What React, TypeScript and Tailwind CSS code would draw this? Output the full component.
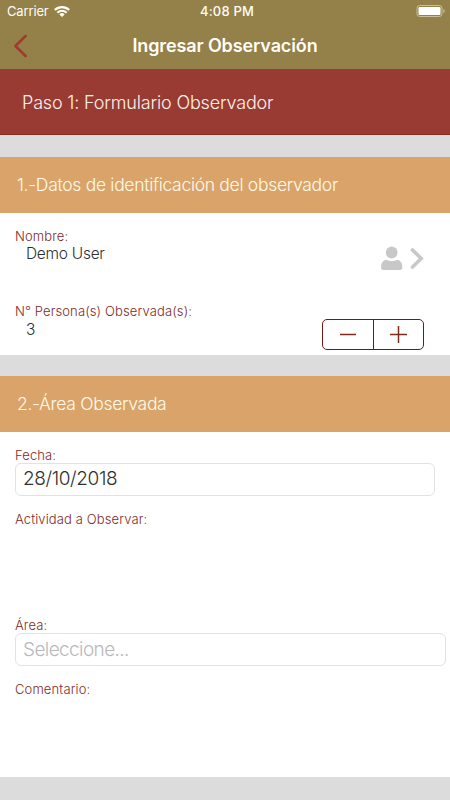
import { useState } from "react";

function SectionTitle({ children }: { children: string }) {
  return (
    <h2 className="flex h-14 items-center bg-[#d9a369] pl-[17px] pt-px text-[17.5px] font-[350] tracking-[-0.3px] text-[#fffbea]">
      {children}
    </h2>
  );
}

function Label({ children }: { children: string }) {
  return (
    <div className="text-[13px] leading-4 font-light tracking-[0.12px] text-[#80291f]">
      {children}
    </div>
  );
}

export default function App() {
  const [count, setCount] = useState(3);

  return (
    <div className="flex h-[800px] w-[450px] flex-col overflow-hidden bg-[#dcdcdc] font-['Inter',sans-serif]">
      <header className="h-[69px] shrink-0 bg-[#948049] text-[#fffef6]">
        <div className="grid h-[23px] grid-cols-3 items-center pl-[7px] pr-[5px] text-[13px]">
          <div className="flex items-center gap-[5px]">
            <span className="tracking-[-0.15px]">Carrier</span>
            <svg width="16" height="11" viewBox="0 0 16 11" fill="none" stroke="currentColor" strokeWidth="2.1">
              <path d="M.8 4.1a10.2 10.2 0 0 1 14.4 0" />
              <path d="M3.4 6.7a6.5 6.5 0 0 1 9.2 0" />
              <path d="M8 11 5.4 8.4a3.7 3.7 0 0 1 5.2 0Z" fill="currentColor" stroke="none" />
            </svg>
          </div>
          <span className="pl-[2px] text-center font-medium tracking-[0.2px]">4:08 PM</span>
          <svg className="mb-[2px] justify-self-end" width="29" height="12" viewBox="0 0 29 12">
            <rect x="1" y=".5" width="25" height="11" rx="2.7" fill="none" stroke="#c9bf9f" />
            <rect x="2.5" y="2" width="22" height="8" rx="1.2" fill="#fff" />
            <path d="M27.3 4v4c1.8-.6 1.8-3.4 0-4Z" fill="#c9bf9f" />
          </svg>
        </div>
        <div className="grid h-[45px] grid-cols-[60px_1fr_60px] items-center">
          <button className="pl-[13px]">
            <svg width="15" height="24" viewBox="0 0 15 24" fill="none" stroke="#a03c2f" strokeWidth="2.6" strokeLinecap="round" strokeLinejoin="round">
              <path d="M12.6 2 2.4 12l10.2 10" />
            </svg>
          </button>
          <h1 className="text-center text-[18px] font-semibold tracking-[-0.12px]">Ingresar Observación</h1>
        </div>
      </header>

      <div className="flex h-[66px] shrink-0 items-center border-b border-[#8b2a20] bg-[#993b32] pl-[22px] pt-[2px] text-[18px] font-[350] tracking-[-0.17px] text-[#fdf3ee]">
        Paso 1: Formulario Observador
      </div>

      <section className="mt-[22px] h-[198px] shrink-0 bg-white">
        <SectionTitle>1.-Datos de identificación del observador</SectionTitle>
        <div className="flex h-[75px] justify-between pl-[15px] pr-[26px] pt-[15px]">
          <div>
            <Label>Nombre:</Label>
            <div className="pl-[11px] pt-px text-[15.5px] leading-[18px] font-light tracking-[-0.28px] text-[#2f2f2f]">Demo User</div>
          </div>
          <svg className="mt-[17px]" width="43" height="26" viewBox="0 0 43 26" fill="#c8c8c8">
            <circle cx="10.7" cy="7.5" r="5.9" />
            <path d="M0 22.3C0 18 1.800 15.500 5.200 14.800c3.400 1.900 7.600 1.900 11 0 3.500.700 5.200 3.200 5.200 7.500 0 2-.700 2.700-2.500 2.700H2.500C.700 25 0 24.300 0 22.300Z" />
            <path d="m31.5 5 8.7 8.5-8.7 8.5" fill="none" stroke="#c8c8c8" strokeWidth="3.6" strokeLinecap="round" />
          </svg>
        </div>
        <div className="flex justify-between pl-[15px] pr-[26px] pt-[15px]">
          <div>
            <Label>N° Persona(s) Observada(s):</Label>
            <div className="pl-[11px] pt-px text-[15.5px] leading-5 font-light text-[#2f2f2f]">{count}</div>
          </div>
          <div className="mt-4 flex h-[31px] w-[102px] rounded-[5px] border border-[#6f1913] text-[#80291f]">
            <button
              onClick={() => setCount((prev) => prev - 1)}
              className="flex w-[51px] items-center justify-center border-r border-[#6f1913]"
            >
              <svg width="16" height="17" viewBox="0 0 16 17" stroke="currentColor" strokeWidth="1.5">
                <path d="M0 8.5h16" />
              </svg>
            </button>
            <button
              onClick={() => setCount((prev) => prev + 1)}
              className="flex flex-1 items-center justify-center"
            >
              <svg width="17" height="17" viewBox="0 0 17 17" stroke="currentColor" strokeWidth="1.5">
                <path d="M0 8.5h17M8.5 0v17" />
              </svg>
            </button>
          </div>
        </div>
      </section>

      <section className="mt-[21px] h-[401px] shrink-0 bg-white">
        <SectionTitle>2.-Área Observada</SectionTitle>
        <div className="pl-[15px] pt-[15px]">
          <Label>Fecha:</Label>
          <div className="flex h-[33px] w-[420px] items-center rounded-[6px] border border-[#e2e2e2] pl-[7px] text-[19px] font-light tracking-[-0.4px] text-[#303030]">
            28/10/2018
          </div>
          <div className="h-[107px] pt-[15px]">
            <Label>Actividad a Observar:</Label>
          </div>
          <div className="pt-[14px]">
            <Label>Área:</Label>
            <div className="flex h-[33px] w-[431px] items-center rounded-[6px] border border-[#e2e2e2] pl-[7px] pt-px text-[19px] font-light tracking-[-0.6px] text-[#b8b8bc]">
              Seleccione...
            </div>
          </div>
          <div className="pt-[15px]">
            <Label>Comentario:</Label>
          </div>
        </div>
      </section>
    </div>
  );
}
